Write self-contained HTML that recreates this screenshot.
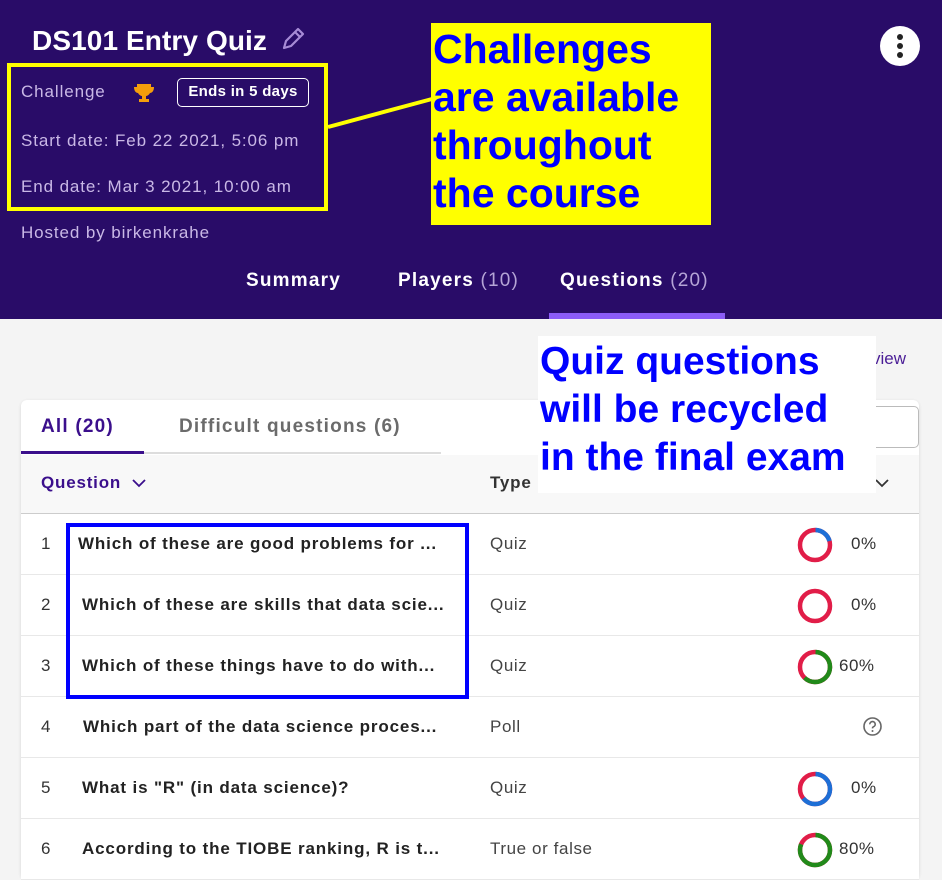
<!DOCTYPE html>
<html><head><meta charset="utf-8"><style>
*{margin:0;padding:0;box-sizing:border-box}
body{width:942px;height:879px;overflow:hidden;background:#f4f4f4;font-family:"Liberation Sans",sans-serif;position:relative}
.a{position:absolute;white-space:nowrap}
.hdr{position:absolute;left:0;top:0;width:942px;height:319px;background:#290c68}
.lt{color:#c9b8e6;font-size:17px;letter-spacing:0.9px}
.card{position:absolute;left:21px;top:400px;width:898px;height:479px;background:#fff;border-radius:6px;box-shadow:0 1px 3px rgba(0,0,0,.12)}
.row{position:absolute;left:21px;width:898px;height:61px;border-bottom:1px solid #e8e8e8;background:#fff}
.num{position:absolute;left:20px;top:20px;font-size:17px;color:#333}
.q{position:absolute;top:20px;font-size:17px;font-weight:bold;color:#222;letter-spacing:0.85px}
.ty{position:absolute;left:469px;top:20px;font-size:17px;color:#444;letter-spacing:0.6px}
.pc{position:absolute;top:20px;font-size:17px;color:#333;letter-spacing:0.5px}
svg.d{position:absolute;left:776px;top:13px}
.tab{font-size:19px;font-weight:bold;letter-spacing:1.2px}
</style></head><body>
<div class="hdr"></div>
<div class="a" style="left:32px;top:25px;font-size:28px;color:#fff;font-weight:bold;letter-spacing:0.1px">DS101 Entry Quiz</div>
<svg class="a" style="left:280px;top:26px" width="26" height="26" viewBox="0 0 26 26"><path d="M4 22 L6 15 L18 3 L23 8 L11 20 Z M15 6 L20 11" fill="none" stroke="#a78bd6" stroke-width="2.2" stroke-linejoin="round"/></svg>
<div class="a lt" style="left:21px;top:82px">Challenge</div>
<svg class="a" style="left:133px;top:82px" width="22" height="22" viewBox="0 0 22 22"><path d="M4 2h14v3h3c0 4-2 6-4 6-1 2-3 3-4 3v3h3v3H6v-3h3v-3c-1 0-3-1-4-3-2 0-4-2-4-6h3z" fill="#f59e0b"/></svg>
<div class="a" style="left:177px;top:78px;width:132px;height:29px;border:1.5px solid #fff;border-radius:5px;color:#fff;font-weight:bold;font-size:15px;text-align:center;line-height:26px;letter-spacing:0.3px">Ends in 5 days</div>
<div class="a lt" style="left:21px;top:131px">Start date: Feb 22 2021, 5:06 pm</div>
<div class="a lt" style="left:21px;top:177px">End date: Mar 3 2021, 10:00 am</div>
<div class="a lt" style="left:21px;top:223px">Hosted by birkenkrahe</div>
<div class="a" style="left:7px;top:63px;width:321px;height:148px;border:4px solid #ffff00"></div>
<svg class="a" style="left:0;top:0" width="942" height="879"><line x1="328" y1="127" x2="432" y2="99" stroke="#ffff00" stroke-width="4"/><line x1="466" y1="587" x2="621" y2="488" stroke="#0000ff" stroke-width="4"/></svg>
<div class="a" style="left:431px;top:23px;width:280px;height:202px;background:#ffff00"></div>
<div class="a" style="left:433px;top:25px;font-size:41px;line-height:48px;font-weight:bold;color:#0000ff">Challenges<br>are available<br>throughout<br>the course</div>
<div class="a" style="left:880px;top:26px;width:40px;height:40px;border-radius:50%;background:#fff"></div>
<div class="a" style="left:897px;top:34px;width:6px;height:6px;border-radius:50%;background:#222;box-shadow:0 9px 0 #222,0 18px 0 #222"></div>
<div class="a tab" style="left:246px;top:270px;color:#fff">Summary</div>
<div class="a tab" style="left:398px;top:270px;color:#fff">Players <span style="font-weight:normal;color:#b5a5d6">(10)</span></div>
<div class="a tab" style="left:560px;top:270px;color:#fff">Questions <span style="font-weight:normal;color:#b5a5d6">(20)</span></div>
<div class="a" style="left:549px;top:313px;width:176px;height:6px;background:#8b5cf6"></div>
<div class="a" style="left:872px;top:349px;font-size:17px;color:#4a1d96">view</div>
<div class="card"></div>
<div class="a tab" style="left:41px;top:416px;color:#3b0f8c">All (20)</div>
<div class="a" style="left:21px;top:451px;width:123px;height:3px;background:#3b0f8c"></div>
<div class="a" style="left:144px;top:452px;width:297px;height:2px;background:#ddd"></div>
<div class="a tab" style="left:179px;top:416px;color:#6b6b6b">Difficult questions (6)</div>
<div class="a" style="left:700px;top:406px;width:219px;height:42px;border:1px solid #bbb;border-radius:5px;background:#fff"></div>
<div class="a" style="left:21px;top:455px;width:898px;height:59px;background:#f8f8f8;border-bottom:1.5px solid #ccc"></div>
<div class="a" style="left:41px;top:473px;font-size:17px;font-weight:bold;color:#3b0f8c;letter-spacing:0.8px">Question</div>
<svg class="a" style="left:131px;top:478px" width="16" height="10" viewBox="0 0 16 10"><path d="M2 2l6 6 6-6" fill="none" stroke="#3b0f8c" stroke-width="1.8"/></svg>
<div class="a" style="left:490px;top:473px;font-size:17px;font-weight:bold;color:#333;letter-spacing:0.8px">Type</div>
<svg class="a" style="left:874px;top:478px" width="16" height="10" viewBox="0 0 16 10"><path d="M2 2l6 6 6-6" fill="none" stroke="#333" stroke-width="1.8"/></svg>

<div class="row" style="top:514px"><div class="num">1</div><div class="q" style="left:57px">Which of these are good problems for ...</div><div class="ty">Quiz</div>
<svg class="d" width="36" height="36" viewBox="0 0 36 36"><circle cx="18" cy="18" r="15" fill="none" stroke="#e11d48" stroke-width="4.5"/><circle cx="18" cy="18" r="15" fill="none" stroke="#1d6fd6" stroke-width="4.5" stroke-dasharray="19 100" transform="rotate(-88 18 18)"/></svg><div class="pc" style="left:830px">0%</div></div>
<div class="row" style="top:575px"><div class="num">2</div><div class="q" style="left:61px">Which of these are skills that data scie...</div><div class="ty">Quiz</div>
<svg class="d" width="36" height="36" viewBox="0 0 36 36"><circle cx="18" cy="18" r="15" fill="none" stroke="#e11d48" stroke-width="4.5"/></svg><div class="pc" style="left:830px">0%</div></div>
<div class="row" style="top:636px"><div class="num">3</div><div class="q" style="left:61px">Which of these things have to do with...</div><div class="ty">Quiz</div>
<svg class="d" width="36" height="36" viewBox="0 0 36 36"><circle cx="18" cy="18" r="15" fill="none" stroke="#e11d48" stroke-width="4.5"/><circle cx="18" cy="18" r="15" fill="none" stroke="#218a1a" stroke-width="4.5" stroke-dasharray="58 100" transform="rotate(-88 18 18)"/></svg><div class="pc" style="left:818px">60%</div></div>
<div class="row" style="top:697px"><div class="num">4</div><div class="q" style="left:62px">Which part of the data science proces...</div><div class="ty">Poll</div>
<svg class="a" style="left:841px;top:19px" width="21" height="21" viewBox="0 0 21 21"><circle cx="10.5" cy="10.5" r="8.5" fill="none" stroke="#666" stroke-width="1.6"/><path d="M7.8 8.3a2.7 2.7 0 1 1 3.6 2.5c-.7.3-.9.8-.9 1.6" fill="none" stroke="#666" stroke-width="1.6"/><circle cx="10.5" cy="15" r="1" fill="#666"/></svg></div>
<div class="row" style="top:758px"><div class="num">5</div><div class="q" style="left:61px">What is "R" (in data science)?</div><div class="ty">Quiz</div>
<svg class="d" width="36" height="36" viewBox="0 0 36 36"><circle cx="18" cy="18" r="15" fill="none" stroke="#e11d48" stroke-width="4.5"/><circle cx="18" cy="18" r="15" fill="none" stroke="#1d6fd6" stroke-width="4.5" stroke-dasharray="60 100" transform="rotate(-88 18 18)"/></svg><div class="pc" style="left:830px">0%</div></div>
<div class="row" style="top:819px"><div class="num">6</div><div class="q" style="left:61px">According to the TIOBE ranking, R is t...</div><div class="ty">True or false</div>
<svg class="d" width="36" height="36" viewBox="0 0 36 36"><circle cx="18" cy="18" r="15" fill="none" stroke="#e11d48" stroke-width="4.5"/><circle cx="18" cy="18" r="15" fill="none" stroke="#218a1a" stroke-width="4.5" stroke-dasharray="76 100" transform="rotate(-88 18 18)"/></svg><div class="pc" style="left:818px">80%</div></div>

<div class="a" style="left:66px;top:523px;width:403px;height:176px;border:4px solid #0000ff"></div>
<div class="a" style="left:538px;top:336px;width:338px;height:157px;background:#fff"></div>
<div class="a" style="left:540px;top:338px;font-size:39px;line-height:48px;font-weight:bold;color:#0000ff">Quiz questions<br>will be recycled<br>in the final exam</div>
</body></html>
